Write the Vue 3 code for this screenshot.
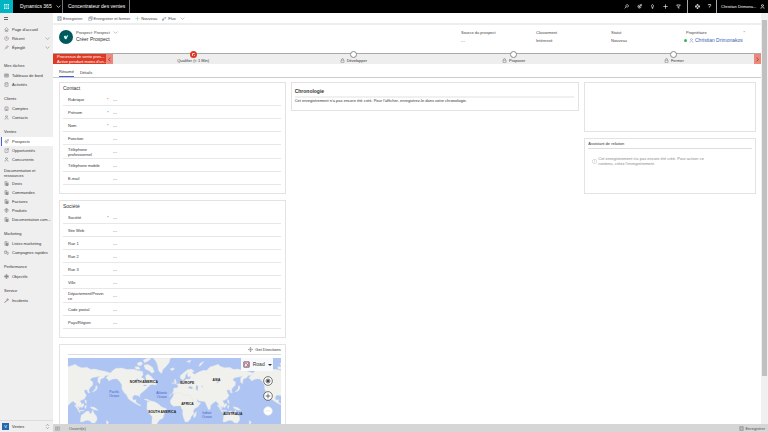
<script setup>
import { ref } from 'vue'

const icons = {
  home: 'M2 8 8 2l6 6M4 7v7h3v-4h2v4h3V7',
  clock: 'M8 2a6 6 0 1 0 .1 0M8 4v4h3',
  pin: 'M2 14l4-4M5 7l4 4 1-3 4-3-3-3-3 4z',
  board: 'M2 3h12v10H2zM2 7h12M6 3v10M10 3v10',
  task: 'M3 3h10v11H3zM5 8l2 2 4-4M6 1v3M10 1v3',
  account: 'M3 3h10v11H3zM6 6h1M9 6h1M6 9h1M9 9h1M7 14v-3h2v3',
  person: 'M8 2a3 3 0 1 0 .1 0M3 15c0-8 10-8 10 0',
  lead: 'M13 8a5 5 0 1 1-5-5M7 9l7-7M10 2h4v4M8 6a2 2 0 1 0 2 2',
  chance: 'M9 3H3v11h10V7M9 2h5v5M8 8l6-6',
  doc: 'M3 2h7l3 3v9H3zM5 6h5M5 8h6M5 11h6M8 9h5v5H8z',
  product: 'M8 2l5 2v5c0 3-3 4-5 5-2-1-5-2-5-5V4zM8 2v12M4 6h8',
  goal: 'M8 2a6 6 0 1 0 .1 0M8 5a3 3 0 1 0 .1 0M8 2v12M2 8h12',
  campaign: 'M2 3h6v8H2zM4 5h2M9 7h4v7H9M12 9h2',
  wrench: 'M2 14l7-7c-1-4 2-6 4-4l-2 2 1 1 2-2c1 3-1 5-4 4l-6 6z',
  save: 'M2 2h12v12H2zM5 2v4h6V2M5 14V9h6v5',
  saveClose: 'M5 2h9v9h-3M2 5h9v9H2zM5 5v3h4V5',
  plus: 'M8 1v14M1 8h14',
  flow: 'M2 12h4V6h6M10 3l3 3-3 3M1 10h3v4H1z',
  search: 'M10 2a4 4 0 1 0 .1 0M7 9l-5 5',
  bulb: 'M8 2a4 4 0 0 0-2 7v2h4V9a4 4 0 0 0-2-7M6 14h4',
  filter: 'M2 3h12L9 9v5l-2-2V9z',
  gear: 'M8 2a6 6 0 1 0 .1 0M8 5a3 3 0 1 0 .1 0M8 0v4M8 12v4M0 8h4M12 8h4',
  lock: 'M3 7h10v7H3zM5 7V4c0-3 6-3 6 0v3',
  info: 'M8 1a7 7 0 1 0 .1 0M8 4v5M8 11v1',
  arrows: 'M8 1v14M1 8h14M5 4l3-3 3 3M5 12l3 3 3-3M4 5L1 8l3 3M12 5l3 3-3 3',
  screen: 'M1 3h14v10H1zM4 6h5v4H4M11 6h2',
  down: 'M2 5l6 6 6-6',
  left: 'M11 2L5 8l6 6',
  right: 'M5 2l6 6-6 6',
  updown: 'M3 6l5-5 5 5M3 10l5 5 5-5'
}

const quick = [
  { label: "Page d'accueil", icon: 'home' },
  { label: 'Récent', icon: 'clock', more: true },
  { label: 'Épinglé', icon: 'pin', more: true }
]
const groups = [
  { title: 'Mes tâches', items: [['Tableaux de bord', 'board'], ['Activités', 'task']] },
  { title: 'Clients', items: [['Comptes', 'account'], ['Contacts', 'person']] },
  { title: 'Ventes', items: [['Prospects', 'lead'], ['Opportunités', 'chance'], ['Concurrents', 'person']] },
  {
    title: 'Documentation et ressources',
    items: [['Devis', 'doc'], ['Commandes', 'doc'], ['Factures', 'doc'], ['Produits', 'product'], ['Documentation com...', 'doc']]
  },
  { title: 'Marketing', items: [['Listes marketing', 'doc'], ['Campagnes rapides', 'campaign']] },
  { title: 'Performance', items: [['Objectifs', 'goal']] },
  { title: 'Service', items: [['Incidents', 'wrench']] }
]
const commands = [
  { label: 'Enregistrer', icon: 'save', tone: 'navy' },
  { label: 'Enregistrer et fermer', icon: 'saveClose', tone: 'navy' },
  { label: 'Nouveau', icon: 'plus', tone: 'green' },
  { label: 'Flux', icon: 'flow', tone: 'navy', more: true }
]
const tools = ['search', 'lead', 'bulb', 'plus', 'filter']
const facts = [
  { label: 'Source du prospect', value: '---' },
  { label: 'Classement', value: 'Intéressé' },
  { label: 'Statut', value: 'Nouveau' }
]
const stages = [
  { label: 'Qualifier (< 1 Min)', active: true },
  { label: 'Développer' },
  { label: 'Proposer' },
  { label: 'Fermer' }
]
const cards = ref([
  {
    title: 'Contact',
    fields: [
      { label: 'Rubrique', mark: 'red', value: '---' },
      { label: 'Prénom', mark: 'blue', value: '---' },
      { label: 'Nom', mark: 'red', value: '---' },
      { label: 'Fonction', value: '---' },
      { label: 'Téléphone professionnel', tall: true, value: '---' },
      { label: 'Téléphone mobile', value: '---' },
      { label: 'E-mail', value: '---' }
    ]
  },
  {
    title: 'Société',
    fields: [
      { label: 'Société', mark: 'blue', value: '---' },
      { label: 'Site Web', value: '---' },
      { label: 'Rue 1', value: '---' },
      { label: 'Rue 2', value: '---' },
      { label: 'Rue 3', value: '---' },
      { label: 'Ville', value: '---' },
      { label: 'Département/Province', tall: true, value: '---' },
      { label: 'Code postal', value: '---' },
      { label: 'Pays/Région', value: '---' }
    ]
  }
])
const copies = [-428, 0, 428]
const places = [
  ['NORTH AMERICA', 252, 92], ['EUROPE', 382, 96], ['ASIA', 470, 88],
  ['AFRICA', 383, 158], ['SOUTH AMERICA', 307, 182], ['AUSTRALIA', 519, 190]
]
const oceans = [['Pacific', 163, 122], ['Atlantic', 306, 125], ['Indian', 441, 185]]
</script>

<template>
  <div class="app">
    <header class="topbar">
      <button class="waffle" aria-label="Applications">
        <svg viewBox="0 0 7 7"><path d="M0 0h2v2H0zM3 0h1v2H3zM5 0h2v2H5zM0 3h2v1H0zM3 3h1v1H3zM5 3h2v1H5zM0 5h2v2H0zM3 5h1v2H3zM5 5h2v2H5z" /></svg>
      </button>
      <button class="brand">Dynamics 365
        <svg class="ico" viewBox="0 0 16 16"><path :d="icons.down" /></svg>
      </button>
      <span class="area">Concentrateur des ventes</span>
      <nav class="tools">
        <button v-for="t in tools" :key="t" :aria-label="t"><svg class="ico" viewBox="0 0 16 16"><path :d="icons[t]" /></svg></button>
      </nav>
      <nav class="tools settings">
        <button aria-label="Paramètres"><svg class="ico" viewBox="0 0 16 16"><path :d="icons.gear" /></svg></button>
        <button class="help">?</button>
      </nav>
      <button class="user"><span>Christian Drimona...</span>
        <svg class="ico" viewBox="0 0 16 16"><path :d="icons.person" /></svg>
      </button>
    </header>

    <div class="body">
      <aside class="side">
        <button class="burger" aria-label="Menu"><svg viewBox="0 0 4 4"><path d="M0 0h4v1H0zM0 2h4v1H0z" /></svg></button>
        <nav class="menu">
          <a v-for="q in quick" :key="q.label" href="#" class="item">
            <svg class="ico" viewBox="0 0 16 16"><path :d="icons[q.icon]" /></svg>{{ q.label }}
            <svg v-if="q.more" class="ico more" viewBox="0 0 16 16"><path :d="icons.down" /></svg>
          </a>
          <div class="groups">
            <section v-for="g in groups" :key="g.title">
              <h2>{{ g.title }}</h2>
              <a v-for="[label, icon] in g.items" :key="label" href="#" class="item" :class="{ current: label === 'Prospects' }">
                <svg class="ico" viewBox="0 0 16 16"><path :d="icons[icon]" /></svg>{{ label }}
              </a>
            </section>
          </div>
        </nav>
        <button class="switcher">
          <span class="tile">V</span>Ventes
          <svg class="ico" viewBox="0 0 16 16"><path :d="icons.updown" /></svg>
        </button>
      </aside>

      <div class="work">
        <div class="scroller">
          <main>
            <div class="commands">
              <button v-for="c in commands" :key="c.label">
                <svg class="ico" :class="c.tone" viewBox="0 0 16 16"><path :d="icons[c.icon]" /></svg>{{ c.label }}
                <svg v-if="c.more" class="ico more" viewBox="0 0 16 16"><path :d="icons.down" /></svg>
              </button>
            </div>

            <div class="record">
              <span class="avatar"><svg viewBox="0 0 16 16"><path d="M2 6l5-2 1 4 3-5 3 1-3 5-2 5-4-1z" /></svg></span>
              <div class="name">
                <button>Prospect: Prospect <svg class="ico" viewBox="0 0 16 16"><path :d="icons.down" /></svg></button>
                <h1>Créer Prospect</h1>
              </div>
              <dl v-for="f in facts" :key="f.label" class="fact">
                <dt>{{ f.label }}</dt>
                <dd>{{ f.value }}</dd>
              </dl>
              <dl class="fact owner">
                <dt>Propriétaire<i class="red">*</i></dt>
                <dd><b class="dot"></b><svg class="ico" viewBox="0 0 16 16"><path :d="icons.person" /></svg><a href="#">Christian Drimonakos</a></dd>
              </dl>
            </div>

            <div class="process">
              <div class="flag"><p>Processus de vente pros...</p><p>Active pendant moins d'un...</p></div>
              <button class="step" aria-label="Précédent"><svg class="ico" viewBox="0 0 16 16"><path :d="icons.left" /></svg></button>
              <ol>
                <li v-for="s in stages" :key="s.label" :class="{ active: s.active }">
                  <button class="knob" :aria-label="s.label"></button>
                  <span><svg v-if="!s.active" class="ico" viewBox="0 0 16 16"><path :d="icons.lock" /></svg>{{ s.label }}</span>
                </li>
              </ol>
              <button class="step" aria-label="Suivant"><svg class="ico" viewBox="0 0 16 16"><path :d="icons.right" /></svg></button>
            </div>

            <div class="tabs" role="tablist">
              <button role="tab" class="on">Résumé</button>
              <button role="tab">Détails</button>
            </div>

            <div class="columns">
              <div class="col">
                <section v-for="c in cards" :key="c.title" class="card form">
                  <h3>{{ c.title }}</h3>
                  <div v-for="(f, i) in c.fields" :key="f.label" class="field" :class="{ tall: f.tall }">
                    <label :for="c.title + i">{{ f.label }}</label>
                    <i :class="f.mark">{{ f.mark ? '*' : '' }}</i>
                    <input :id="c.title + i" v-model="f.value" type="text" />
                  </div>
                </section>
                <section class="card mapcard">
                  <div class="route"><button><svg class="ico" viewBox="0 0 16 16"><path :d="icons.arrows" /></svg>Get Directions</button></div>
                  <div class="map">
                    <svg class="world" viewBox="24 18 639 216" preserveAspectRatio="xMidYMin slice">
                      <defs>
                        <g id="land">
                          <path d="M158 56l10-7 18-1 14 4 22 0 14 4 12 2 2 10-6 8 8 4 2 9 5-5-2-12 6-6 10 6 8 10 10 8-7 7-13 2-8 8-6 6-10 8-7 7 1 8-5-5-12-2-6 6 2 9 9-1-1 7 8 6 8 4-5 1-11-6-10-6-12-8-6-12-8-8-6-10 0-12-6-10-8-8-12 0-14 6-2-6-6-3z" />
                          <path d="M232 34l10-5 7 5-6 7-9-1zM250 24l14-6 10 2-10 8-10 4zM252 39l12-2 14 9 6 14-8 4-8-8-12-5zM225 44l12 0 4 8-13 0zM279 96l8-4 4 6-9 1z" />
                          <path d="M280 18h52l-4 14-10 12-8 8-5 13-9-9-3-16-5-12zM331 50l10-3 3 5-9 4zM252 141l12 1 7 5-9-1z" />
                          <path d="M262 150l10-4 14 4 10 6 9 8 15 6 1 7-8 9-3 12-11 6-8 12-7 18h-9l1-24 1-16-9-10-7-14z" />
                          <path d="M340 120l2-12 11-1 2-6-5-4 9-2 7-8 8-1 5-5 11 0 3-8-8 2-3-6 2-8-7 9-1 8-7 6-8-5 0-8 12-10 10-8 11-2 10 7-8 3 8 6 14-8 12-4 11 0 9-10 12-4 13-4 7 6 12 4 16-1 10 6 14-1 14 4 15 3 17 5-4 7-12 1-3 6-11 5-2 14-6-6 0-12 6-5-11 2-14 3-4 7 8 4 0 10-9 9-3 7 3 7-5 1-4-9-8 0 2 8 5 8-6 10-8 5-6 1 5 8 1 8-7 6-4-6-1 9 8 9-3 2-8-13-3-14-8-7-5 3-10 9-2 12-5 1-7-15-3-8-8-2-10-1-8-5 4 8 9 2-9 13-14 7-5-5-10-21 2-8-16-2-2-6-5 5-4 0-7-10-7-3 7 12-4 1-9-11-8 3-4 7z" />
                          <path d="M343 124l14-2 8 1 1 5 9 2 5-2 12 2 6 13 6 10 11 0-5 10-9 12 1 11-7 6-3 9-7 8-9 1-5-13-3-12 1-9-5-9-1-5-11 0-11 1-8-7-2-10 7-10zM405 183l5-4-2 13-6 6-1-8z" />
                          <path d="M492 190l9-6 6-6 8-1 2 6 5 2 4-11 6 11 7 9 1 9-7 10-9 0-7-7-9-1-12 5-7-1zM530 216l6 0-2 5zM568 205l7 6-10 12-5 1 8-8z" />
                          <path d="M474 158l12 12-1 3-13-12zM490 160l9-6 2 5-7 9zM487 174l14 1-1 2-13-1zM503 161l5-1-2 10-3-2zM520 164l12 2 12 9-12-1-10-5zM503 143l4 1 1 11-4-3zM536 101l4 1 0 9-7 7-8 2 9-8zM343 97l7-3-3-12-5 2 3 6zM336 93l5-2-1 5zM417 42l4-8 12-6-8 10-5 5zM380 28l14-4-5 8z" />
                        </g>
                      </defs>
                      <use v-for="c in copies" :key="c" href="#land" :x="c" class="land" />
                      <path class="water" d="M384 107l8-5 8 6-6 3zM409 100l6 3-2 14-5-6zM228 83l6-4 1 6zM250 99l8-1 3 4-9 0zM425 101l4 1-2 5zM470 91l9-5 1 2-8 6z" />
                      <g class="place"><text v-for="[t, x, y] in places" :key="t" :x="x" :y="y">{{ t }}</text></g>
                      <g v-for="[t, x, y] in oceans" :key="t" class="ocean">
                        <text :x="x" :y="y">{{ t }}</text>
                        <text :x="x" :y="y + 12">Ocean</text>
                      </g>
                    </svg>
                    <div class="overlay">
                      <button class="style"><svg viewBox="0 0 8 8"><path d="M1 1h6v6H1z" class="paper" /><path d="M1 5l2-3 4 4M4 7l3-5" class="r1" /></svg>Road<b></b></button>
                      <button class="round" aria-label="Localiser"><svg viewBox="0 0 30 30"><circle cx="15" cy="15" r="13" /><circle cx="15" cy="15" r="6" /><circle cx="15" cy="15" r="3" class="full" /></svg></button>
                      <button class="round" aria-label="Zoom avant"><svg viewBox="0 0 30 30"><circle cx="15" cy="15" r="13" /><path d="M15 8v14M8 15h14" /></svg></button>
                      <button class="round off" aria-label="Zoom arrière"><svg viewBox="0 0 30 30"><circle cx="15" cy="15" r="13" /><path d="M8 15h14" /></svg></button>
                    </div>
                  </div>
                </section>
              </div>

              <section class="card timeline">
                <h3>Chronologie</h3>
                <p>Cet enregistrement n'a pas encore été créé. Pour l'afficher, enregistrez-le dans votre chronologie.</p>
              </section>

              <div class="col">
                <section class="card blank"></section>
                <section class="card assist">
                  <h3>Assistant de relation</h3>
                  <div class="note">
                    <svg class="ico" viewBox="0 0 16 16"><path :d="icons.info" /></svg>
                    <p>Cet enregistrement n'a pas encore été créé. Pour activer ce<br />contenu, créez l'enregistrement.</p>
                  </div>
                </section>
              </div>
            </div>
          </main>
          <div class="rail"><i class="up"></i><div class="thumb"></div><i class="dn"></i></div>
        </div>
        <footer>
          <svg class="ico" viewBox="0 0 16 16"><path :d="icons.screen" /></svg>
          <span>Ouvert(e)</span>
          <button><svg class="ico" viewBox="0 0 16 16"><path :d="icons.save" /></svg>Enregistrer</button>
        </footer>
      </div>
    </div>
  </div>
</template>

<style>
body { margin: 0; overflow: hidden; }
</style>

<style scoped>
.app { display: flex; flex-direction: column; height: 100vh; font: 4px/5px "Liberation Sans", Arial, sans-serif; color: #333; background: #fff; }
.app * { box-sizing: border-box; }
button, input { font: inherit; color: inherit; background: none; border: 0; padding: 0; margin: 0; }
button { display: flex; align-items: center; white-space: nowrap; }
a { color: inherit; text-decoration: none; }
h1, h2, h3, p, dl, dd, ol { margin: 0; padding: 0; font-weight: 400; }
i { font-style: normal; }
.ico { width: 5px; height: 5px; flex: none; fill: none; stroke: currentColor; stroke-width: 1; }
.red { color: #e03020; }
.blue { color: #4058d8; }
.navy { color: #26486c; }
.green { color: #3cb878; }

.topbar { display: flex; align-items: stretch; height: 13px; flex: none; background: #000; color: #fff; }
.topbar .ico { stroke-width: 2; }
.waffle { width: 13px; justify-content: center; background: #00b4c4; }
.waffle svg { width: 5px; height: 5px; fill: #fff; }
.brand { width: 50px; padding-left: 7px; gap: 4px; font-size: 5px; border-right: 1px solid #777; }
.area { width: 67px; padding: 4px 0 0 5px; font-size: 5px; white-space: nowrap; border-right: 1px solid #777; }
.tools { display: flex; gap: 8px; padding-right: 6px; border-right: 1px solid #aaa; }
.tools:not(.settings) { margin-left: auto; }
.settings { padding: 0 5px 0 7px; }
.help { font-size: 6px; }
.user { width: 51px; padding: 0 3px 0 4px; justify-content: space-between; }

.body { display: flex; flex: 1; min-height: 0; }
.side { display: flex; flex-direction: column; width: 53px; flex: none; background: #efefef; }
.burger { height: 12px; padding-left: 4px; }
.burger svg { width: 4px; height: 4px; fill: #666; }
.menu { flex: 1; }
.item { display: flex; align-items: center; gap: 3px; height: 9px; padding-left: 4px; white-space: nowrap; }
.side .more { margin: 0 3px 0 auto; }
.groups { padding-top: 4px; }
.groups h2 { display: flex; align-items: center; height: 15px; padding: 3px 10px 0 4px; font-size: 4px; }
.current { background: #fff; border-left: 1px solid #4a60d8; margin-left: 1px; padding-left: 2px; }
.switcher { height: 12px; border-top: 1px solid #ddd; padding: 0 3px 0 2px; gap: 3px; }
.switcher .ico { margin-left: auto; }
.tile { width: 7px; height: 7px; line-height: 7px; background: #2468b4; color: #fff; }

.work { display: flex; flex-direction: column; flex: 1; min-width: 0; }
.scroller { display: flex; flex: 1; min-height: 0; }
main { flex: 1; min-width: 0; overflow: hidden; }
.commands { display: flex; gap: 5px; height: 12px; padding-left: 4px; border-bottom: 2px solid #eee; color: #444; }
.commands button { gap: 1px; }
.commands .more { margin-left: 3px; }
.record { display: flex; height: 28px; padding: 5px 0 0 6px; }
.avatar { display: grid; place-items: center; width: 14px; height: 14px; border-radius: 50%; background: #00595c; flex: none; }
.avatar svg { width: 6px; height: 6px; fill: #dff; }
.name { margin: 0 auto 0 3px; color: #444; }
.name .ico { margin-left: 3px; }
.name h1 { font-size: 5px; line-height: 8px; color: #333; }
.fact { width: 75px; color: #444; white-space: nowrap; }
.fact dd { margin-top: 3px; }
.fact dt { display: flex; justify-content: space-between; }
.owner dt { width: 59px; }
.owner dd { display: flex; align-items: center; gap: 1px; margin-left: -2px; color: #3b62b8; }
.owner a { font-size: 5px; }
.owner .ico { margin-left: 1px; }
.dot { width: 3px; height: 3px; border-radius: 50%; background: #2db84d; }

.process { display: flex; height: 11px; background: #eee; border-top: 1px solid #aaa; }
.flag { width: 53px; padding-left: 4px; background: #dc3a24; color: #fff; white-space: nowrap; }
.flag p { font-weight: 400; }
.step { width: 7px; justify-content: center; background: #ec887c; color: #722; }
.step .ico { stroke-width: 2; }
.process ol { display: flex; flex: 1; list-style: none; }
.process li { flex: 1; display: flex; flex-direction: column; align-items: center; }
.knob { width: 7px; height: 7px; flex: none; margin-top: -3px; border: 1px solid #888; border-radius: 50%; background: #fff; }
.active .knob { border: 2px solid #dc3a24; background: radial-gradient(#dc3a24 1px, #fff 1px); }
.process span { display: flex; align-items: center; gap: 2px; white-space: nowrap; }

.tabs { display: flex; gap: 6px; height: 14px; padding: 3px 0 0 6px; border-bottom: 1px solid #ccc; }
.tabs .on { border-bottom: 1px solid #4a60d8; }

.columns { display: grid; grid-template-columns: 227fr 289fr 172fr; gap: 5px; padding: 4px 5px 0 6px; align-items: start; }
.col { display: grid; gap: 6px; }
.card { border: 1px solid #e3e3e3; background: #fff; min-width: 0; }
.form { padding: 0 4px 8px 3px; }
.form h3 { height: 10px; line-height: 10px; font-size: 5px; }
.field { display: flex; align-items: center; height: 13px; padding-left: 5px; border-bottom: 1px solid #e8e8e8; }
.tall { height: 14px; }
.field label { width: 37px; overflow-wrap: anywhere; }
.field i { width: 8px; padding-left: 2px; }
.field input { flex: 1; min-width: 0; height: 5px; }
.mapcard { padding: 0 4px 8px 8px; }
.route { display: flex; justify-content: flex-end; height: 10px; border-bottom: 1px solid #ddd; }
.route button { gap: 2px; }
.map { position: relative; margin-top: 3px; height: 72px; background: #aec4f2; overflow: hidden; }
.world { display: block; width: 100%; height: 100%; }
.land { fill: #f0f0ec; stroke: #dfe4ea; stroke-width: 1; }
.water { fill: #aec4f2; }
.place, .ocean { text-anchor: middle; font-size: 10px; }
.place { fill: #222; font-weight: 700; }
.ocean { fill: #4860c8; }
.overlay { position: absolute; top: 0; right: 8px; display: flex; flex-direction: column; align-items: flex-end; gap: 5px; }
.style { height: 13px; padding: 0 1px 0 2px; gap: 3px; background: #f8f9fc; font-size: 5px; }
.style svg { width: 7px; height: 7px; fill: none; }
.paper { fill: #f4e4d8; stroke: #555; stroke-width: 1; }
.r1 { stroke: #c858a0; stroke-width: 1; }
.style b { border: 2px solid transparent; border-top-color: #333; border-bottom: 0; }
.round svg { width: 10px; height: 10px; fill: #fff; stroke: #333; stroke-width: 2; }
.round .full { fill: #333; }
.off svg { stroke: #e4e4e8; }

.timeline { padding: 0 4px 0 3px; height: 29px; }
.timeline h3 { height: 15px; line-height: 16px; font-size: 5px; font-weight: 700; border-bottom: 2px solid #f0f0f0; }
.timeline p { white-space: nowrap; }
.blank { height: 50px; }
.assist { min-height: 56px; padding: 0 3px; }
.assist h3 { height: 10px; line-height: 10px; font-size: 4px; border-bottom: 1px solid #ddd; }
.note { display: flex; align-items: center; gap: 1px; padding: 7px 0 0 4px; color: #888; white-space: nowrap; }

.rail { display: flex; flex-direction: column; align-items: center; width: 7px; flex: none; padding: 3px 0; gap: 2px; background: #f0f0f0; }
.rail i { border: 1px solid transparent; }
.up { border-bottom-color: #666; }
.dn { border-top-color: #222; margin-top: auto; }
.thumb { width: 5px; height: 88%; background: #c0c0c0; }
footer { display: flex; align-items: center; height: 8px; flex: none; padding: 0 3px 0 2px; gap: 9px; background: #d6d6d6; color: #555; }
footer button { margin-left: auto; gap: 1px; }
</style>
